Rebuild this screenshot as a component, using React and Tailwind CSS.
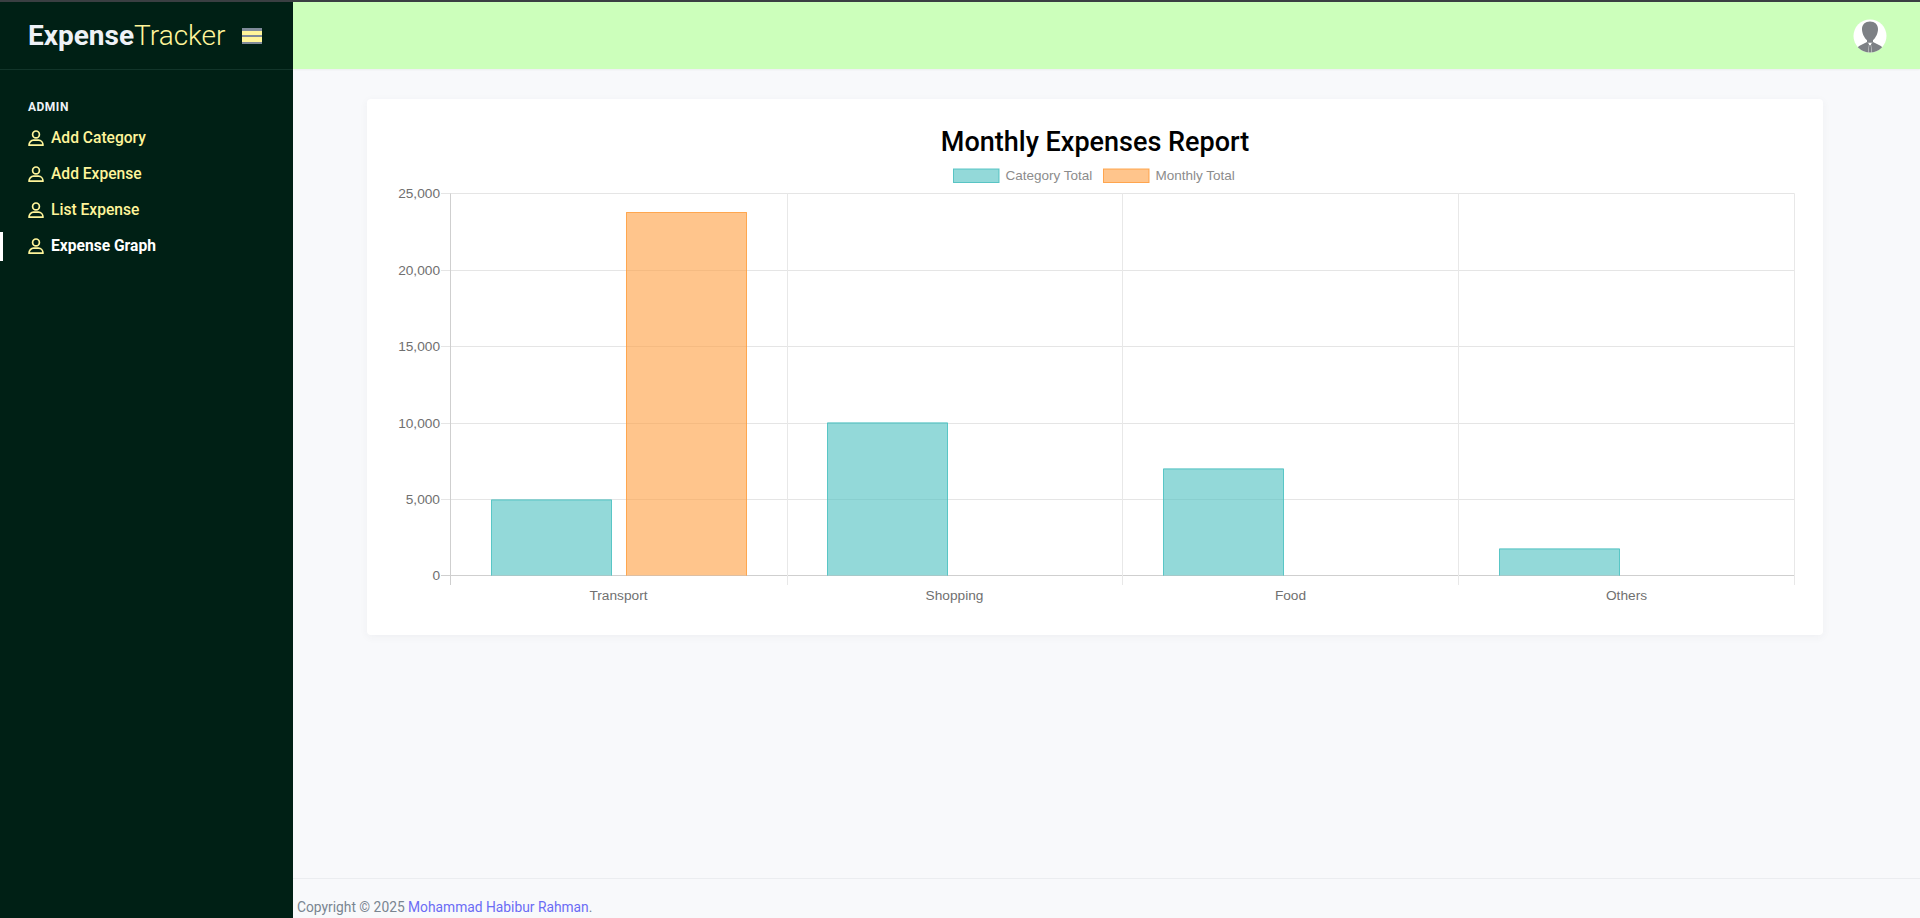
import React from "react";

const plotRight = 1794.5, plotTop = 193.5, plotBottom = 575.5;
const ox = 367, oy = 160;
const groups = ["Transport", "Shopping", "Food", "Others"];
const ticks = ["25,000", "20,000", "15,000", "10,000", "5,000", "0"];
const teal = [[491.5, 500], [827.5, 423], [1163.5, 469], [1499.5, 549]];

function Bar({ x, y, fill, stroke }) {
  const X = x - ox;
  const T = y - oy;
  const B = plotBottom - oy;
  return (
    <g>
      <rect x={X - 0.5} y={T - 0.5} width="121" height={B - T + 0.5} fill={fill} />
      <path d={`M${X} ${B}V${T}H${X + 120}V${B}`} fill="none" stroke={stroke} />
    </g>
  );
}

function Chart() {
  const X = (x) => x - ox;
  const Y = (y) => y - oy;
  const rowYs = [193.5, 270.5, 346.5, 423.5, 499.5, 575.5];
  const colXs = [450.5, 787.5, 1122.5, 1458.5, 1794.5];
  return (
    <svg width="1456" height="450" viewBox="0 0 1456 450" className="block" style={{ fontFamily: '"Liberation Sans", Arial, sans-serif' }}>
      <rect x={X(953.5)} y="9" width="45.5" height="13.5" fill="rgba(75,192,192,0.6)" stroke="rgba(75,192,192,0.9)" />
      <text x={X(1005.5)} y="20" fontSize="13.5" fill="#8c8c8c">Category Total</text>
      <rect x={X(1103.5)} y="9" width="45.5" height="13.5" fill="rgba(255,159,64,0.6)" stroke="rgba(255,159,64,0.9)" />
      <text x={X(1155.5)} y="20" fontSize="13.5" fill="#8c8c8c">Monthly Total</text>

      {rowYs.map((y, i) => (
        <line key={y} x1={X(441)} x2={X(plotRight)} y1={Y(y)} y2={Y(y)} stroke={i === 5 ? "#cfcfcf" : "#e5e5e5"} />
      ))}
      {colXs.map((x, i) => (
        <line key={x} x1={X(x)} x2={X(x)} y1={Y(plotTop)} y2={Y(585)} stroke={i === 0 ? "#cfcfcf" : "#e8e8e8"} />
      ))}

      {teal.map(([x, y]) => (
        <Bar key={x} x={x} y={y} fill="rgba(75,192,192,0.6)" stroke="rgba(75,192,192,0.8)" />
      ))}
      <Bar x={626.5} y={212.5} fill="rgba(255,159,64,0.6)" stroke="rgba(255,159,64,0.8)" />

      {ticks.map((t, i) => (
        <text key={t} x={X(440)} y={Y(rowYs[i] + 4.5)} fontSize="13.7" fill="#707070" textAnchor="end">{t}</text>
      ))}
      {groups.map((g, i) => (
        <text key={g} x={X(618.5 + 336 * i)} y={Y(599.5)} fontSize="13.7" fill="#707070" textAnchor="middle">{g}</text>
      ))}
    </svg>
  );
}

function UserIcon() {
  return (
    <svg width="16" height="16" viewBox="0 0 16 16" fill="none" stroke="#fff59a" strokeWidth="1.7" className="shrink-0 -mt-[3px]">
      <circle cx="8" cy="4.4" r="3.4" />
      <path d="M1 15.2c0-3 2.2-5 4.5-5h5c2.3 0 4.5 2 4.5 5H1z" strokeLinejoin="round" />
    </svg>
  );
}

function NavItem({ label, active }) {
  return (
    <div className={`relative flex items-center h-9 pl-[28px] gap-[7px] text-[15.6px] ${active ? "text-white font-bold" : "text-[#fff59a] font-medium"}`}>
      {active && <span className="absolute left-0 top-[3px] w-[3px] h-[29px] bg-white" />}
      <UserIcon />
      <span>{label}</span>
    </div>
  );
}

function Avatar() {
  return (
    <svg width="34" height="34" viewBox="0 0 34 34" className="block">
      <defs>
        <clipPath id="av"><circle cx="17" cy="17" r="16.5" /></clipPath>
      </defs>
      <circle cx="17" cy="17" r="16.5" fill="#fff" />
      <g clipPath="url(#av)" fill="#7d8085">
        <path d="M17 2.5c4.8 0 8 3 8 7.5 0 4.4-2.4 9-5 11.2v2.5h-6v-2.5c-2.6-2.2-5-6.8-5-11.2 0-4.5 3.2-7.5 8-7.5z" />
        <path d="M14 23l2 2-.8 9H3c.6-4 1.8-6.7 4.5-7.8L14 23z" />
        <path d="M20 23l-2 2 .8 9H31c-.6-4-1.8-6.7-4.5-7.8L20 23z" />
        <path d="M16.3 26h1.4l.9 8h-3.2l.9-8z" />
      </g>
    </svg>
  );
}

export default function App() {
  return (
    <div className="h-screen flex flex-col overflow-hidden bg-[#f8f9fb]" style={{ fontFamily: 'Roboto, "Liberation Sans", sans-serif' }}>
      <div className="h-[2px] bg-[#3a3f42] shrink-0" />
      <div className="flex flex-1 min-h-0">
        <aside className="w-[293px] shrink-0 bg-[#002015] flex flex-col">
          <div className="h-[68px] shrink-0 border-b border-[#12352a] pl-[28px] flex items-center">
            <span className="text-[28px] leading-none text-[#eef2f7] font-bold">Expense</span>
            <span className="text-[28px] leading-none text-[#fff59a] font-light">Tracker</span>
            <span className="ml-[17px] w-[20px] h-[16px] flex flex-col">
              <span className="h-[3px] bg-[#7f8a99]" />
              <span className="h-[4px] bg-[#fff59a]" />
              <span className="h-[2px] bg-[#7f8a99]" />
              <span className="h-[5px] bg-[#fff59a]" />
              <span className="h-[2px] bg-[#7f8a99]" />
            </span>
          </div>
          <div className="pt-[29px]">
            <div className="pl-[28px] h-[16px] flex items-center text-[12px] font-bold tracking-[0.5px] text-[#eef2f7]">ADMIN</div>
            <div className="mt-[6px]">
              <NavItem label="Add Category" />
              <NavItem label="Add Expense" />
              <NavItem label="List Expense" />
              <NavItem label="Expense Graph" active />
            </div>
          </div>
        </aside>
        <div className="flex-1 min-w-0 flex flex-col">
          <header className="h-[67px] shrink-0 bg-[#ccffbb] flex items-center justify-end pr-[33px] shadow-[0_1px_2px_rgba(0,0,0,0.05)]">
            <Avatar />
          </header>
          <main className="flex-1 min-h-0 pt-[30px] pl-[74px]">
            <div className="w-[1456px] h-[536px] bg-white rounded-[4px] shadow-[0_2px_8px_rgba(50,60,80,0.05)]">
              <h1 className="h-[61px] pt-[23px] text-center text-[27px] leading-[40px] font-medium text-black">Monthly Expenses Report</h1>
              <Chart />
            </div>
          </main>
          <footer className="h-[40px] shrink-0 border-t border-[#ebedf0] pl-[4px] pt-[18px] text-[13.8px] leading-[20px] text-[#7a8591]">
            Copyright © 2025 <span className="text-[#6b6cf5]">Mohammad Habibur Rahman</span>.
          </footer>
        </div>
      </div>
    </div>
  );
}
